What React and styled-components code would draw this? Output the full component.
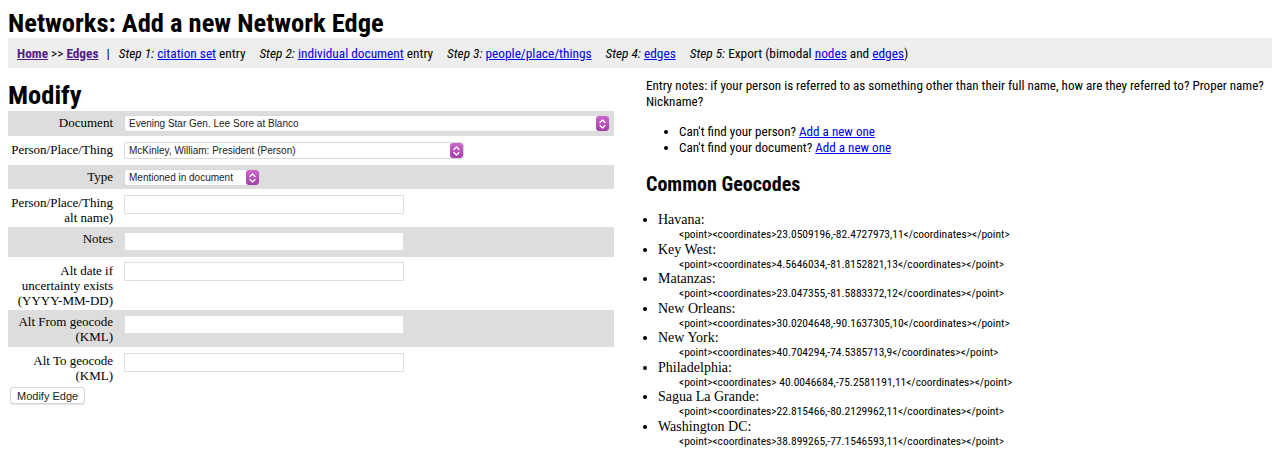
import React from 'react';
import styled, { createGlobalStyle } from 'styled-components';

const GlobalStyle = createGlobalStyle`
  body {
    margin: 8px;
    background: #fff;
    color: #000;
    font-family: "Roboto Condensed", "Liberation Sans Narrow", Roboto, sans-serif;
  }
`;

const condensed = `"Roboto Condensed", "Liberation Sans Narrow", Roboto, sans-serif`;
const serif = `"Liberation Serif", "DejaVu Serif", serif`;
const ui = `"Liberation Sans", Arial, sans-serif`;

const Title = styled.h1`
  margin: 0;
  font-family: ${condensed};
  font-size: 26.5px;
  font-weight: 700;
  line-height: 30px;
`;

const NavBar = styled.div`
  background: #eeeeee;
  height: 30px;
  display: flex;
  align-items: center;
  padding: 0 9px;
  font-size: 13.3px;
  font-family: ${condensed};
  white-space: nowrap;
`;

const NavGroup = styled.span`
  margin-right: ${(p) => p.gap || 14}px;
`;

const Link = styled.a`
  color: ${(p) => (p.visited ? '#551a8b' : '#0000ee')};
  font-weight: ${(p) => (p.bold ? 700 : 400)};
  text-decoration: underline;
  cursor: pointer;
`;

const Step = styled.i`
  font-style: italic;
`;

const Columns = styled.div`
  display: grid;
  grid-template-columns: 606px 1fr;
  column-gap: 32px;
`;

const LeftCol = styled.div``;

const SectionTitle = styled.h2`
  margin: 10px 0 0;
  font-family: ${condensed};
  font-size: 26.5px;
  font-weight: 700;
  line-height: 33px;
`;

const FormTable = styled.div`
  display: flex;
  flex-direction: column;
  gap: 2px;
`;

const Row = styled.div`
  display: grid;
  grid-template-columns: 105px 1fr;
  column-gap: 11px;
  background: ${(p) => (p.shade ? '#dddddd' : 'transparent')};
  padding: 3px 4px 0 0;
  height: ${(p) => p.h}px;
  box-sizing: border-box;
`;

const Label = styled.div`
  font-family: ${serif};
  font-size: 13px;
  line-height: 15px;
  text-align: right;
  padding-top: 1px;
`;

const Field = styled.div`
  display: flex;
  align-items: flex-start;
  padding-top: ${(p) => p.top || 0}px;
`;

const SelectBox = styled.div`
  width: ${(p) => p.w}px;
  height: 17px;
  box-sizing: border-box;
  background: #fff;
  border: 1px solid #d8d8d8;
  border-radius: 3px;
  display: flex;
  align-items: center;
  justify-content: space-between;
  font-family: ${ui};
  font-size: 10px;
  color: #222;
  padding-left: 4px;
  overflow: hidden;
`;

const Stepper = styled.span`
  width: 13px;
  height: 15px;
  border-radius: 3px;
  background: linear-gradient(#cc66cc, #a23fa8);
  display: flex;
  align-items: center;
  justify-content: center;
`;

const TextInput = styled.input`
  width: 280px;
  height: 19px;
  box-sizing: border-box;
  border: 1px solid #e0e0e0;
  background: #fff;
  outline: none;
  padding: 0 4px;
`;

const Button = styled.button`
  margin-top: 3px;
  margin-left: 2px;
  font-family: ${ui};
  font-size: 11px;
  height: 17px;
  padding: 0 6px;
  background: #fff;
  border: 1px solid #d3d3d3;
  border-radius: 3px;
  box-shadow: 0 1px 1px rgba(0, 0, 0, 0.1);
  color: #222;
`;

const RightCol = styled.div`
  padding-top: 10px;
  font-family: ${condensed};
  font-size: 13.1px;
  line-height: 16px;
`;

const Notes = styled.p`
  margin: 0;
`;

const HelpList = styled.ul`
  margin: 14px 0 0;
  padding-left: 33px;
  li {
    line-height: 16px;
  }
`;

const GeoTitle = styled.h3`
  margin: 17px 0 0;
  font-size: 20px;
  font-weight: 700;
  line-height: 22px;
`;

const GeoList = styled.ul`
  margin: 17px 0 0;
  padding-left: 12px;
  font-family: ${serif};
  font-size: 14px;
`;

const GeoItem = styled.li`
  line-height: 15px;
`;

const Coord = styled.div`
  font-family: ${condensed};
  font-size: 11.5px;
  line-height: 14.5px;
  padding-left: 21px;
`;

const StepperIcon = () => (
  <Stepper>
    <svg width="7" height="10" viewBox="0 0 7 10" fill="none" stroke="#fff" strokeWidth="1.3" strokeLinecap="round" strokeLinejoin="round">
      <path d="M1 3.5 L3.5 1 L6 3.5" />
      <path d="M1 6.5 L3.5 9 L6 6.5" />
    </svg>
  </Stepper>
);

const Select = ({ w, value }) => (
  <SelectBox w={w}>
    <span>{value}</span>
    <StepperIcon />
  </SelectBox>
);

const geocodes = [
  ['Havana:', '23.0509196,-82.4727973,11'],
  ['Key West:', '4.5646034,-81.8152821,13'],
  ['Matanzas:', '23.047355,-81.5883372,12'],
  ['New Orleans:', '30.0204648,-90.1637305,10'],
  ['New York:', '40.704294,-74.5385713,9'],
  ['Philadelphia:', ' 40.0046684,-75.2581191,11'],
  ['Sagua La Grande:', '22.815466,-80.2129962,11'],
  ['Washington DC:', '38.899265,-77.1546593,11'],
];

export default function App() {
  return (
    <>
      <GlobalStyle />
      <Title>Networks: Add a new Network Edge</Title>
      <NavBar>
        <NavGroup gap={8}>
          <Link visited bold>Home</Link> &gt;&gt; <Link visited bold>Edges</Link>
        </NavGroup>
        <NavGroup gap={9}>|</NavGroup>
        <NavGroup>
          <Step>Step 1:</Step> <Link>citation set</Link> entry
        </NavGroup>
        <NavGroup>
          <Step>Step 2:</Step> <Link>individual document</Link> entry
        </NavGroup>
        <NavGroup>
          <Step>Step 3:</Step> <Link>people/place/things</Link>
        </NavGroup>
        <NavGroup>
          <Step>Step 4:</Step> <Link>edges</Link>
        </NavGroup>
        <NavGroup>
          <Step>Step 5:</Step> Export (bimodal <Link>nodes</Link> and <Link>edges</Link>)
        </NavGroup>
      </NavBar>
      <Columns>
        <LeftCol>
          <SectionTitle>Modify</SectionTitle>
          <FormTable>
            <Row shade h={25}>
              <Label>Document</Label>
              <Field top={1}><Select w={486} value="Evening Star Gen. Lee Sore at Blanco" /></Field>
            </Row>
            <Row h={25}>
              <Label>Person/Place/Thing</Label>
              <Field top={1}><Select w={340} value="McKinley, William: President (Person)" /></Field>
            </Row>
            <Row shade h={24}>
              <Label>Type</Label>
              <Field top={1}><Select w={136} value="Mentioned in document" /></Field>
            </Row>
            <Row h={34}>
              <Label>Person/Place/Thing alt name)</Label>
              <Field top={1}><TextInput /></Field>
            </Row>
            <Row shade h={30}>
              <Label>Notes</Label>
              <Field top={2}><TextInput /></Field>
            </Row>
            <Row h={49}>
              <Label>Alt date if uncertainty exists (YYYY-MM-DD)</Label>
              <Field><TextInput /></Field>
            </Row>
            <Row shade h={37}>
              <Label>Alt From geocode (KML)</Label>
              <Field top={2}><TextInput /></Field>
            </Row>
            <Row h={35}>
              <Label>Alt To geocode (KML)</Label>
              <Field top={1}><TextInput /></Field>
            </Row>
          </FormTable>
          <Button>Modify Edge</Button>
        </LeftCol>
        <RightCol>
          <Notes>
            Entry notes: if your person is referred to as something other than their full name, how are they referred to? Proper name? Nickname?
          </Notes>
          <HelpList>
            <li>Can't find your person? <Link>Add a new one</Link></li>
            <li>Can't find your document? <Link>Add a new one</Link></li>
          </HelpList>
          <GeoTitle>Common Geocodes</GeoTitle>
          <GeoList>
            {geocodes.map(([name, c]) => (
              <GeoItem key={name}>
                {name}
                <Coord>{`<point><coordinates>${c}</coordinates></point>`}</Coord>
              </GeoItem>
            ))}
          </GeoList>
        </RightCol>
      </Columns>
    </>
  );
}
